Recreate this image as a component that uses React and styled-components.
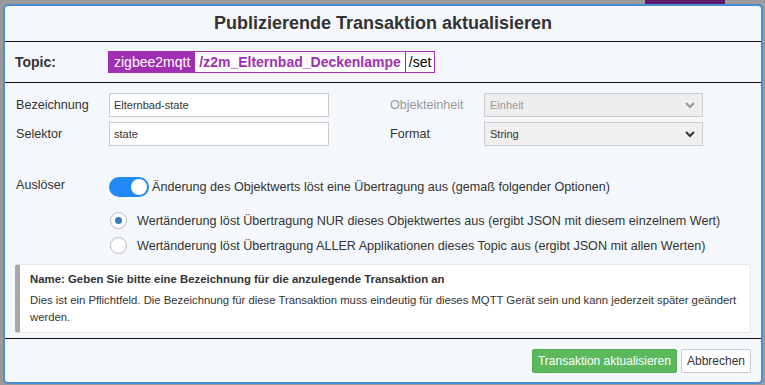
import React from 'react';
import styled, { createGlobalStyle } from 'styled-components';

const GlobalStyle = createGlobalStyle`
  html, body {
    margin: 0;
    padding: 0;
    background: #9b9b9b;
    font-family: "Liberation Sans", Arial, sans-serif;
    color: #333;
  }
`;

const Page = styled.div`
  position: relative;
  width: 765px;
  height: 385px;
  padding: 4px 0 0 3px;
  box-sizing: border-box;
  overflow: hidden;
`;

const BackTab = styled.div`
  position: absolute;
  top: 0;
  left: ${p => p.left}px;
  width: ${p => p.width}px;
  height: 4px;
  background: #5f1a6e;
`;

const Modal = styled.div`
  position: relative;
  width: 760px;
  height: 380px;
  box-sizing: border-box;
  border: 2px solid #4a8fd6;
  border-radius: 5px;
  background: #f4f8fc;
  display: flex;
  flex-direction: column;
`;

const Header = styled.div`
  height: 35px;
  border-bottom: 1px solid #111;
  display: flex;
  align-items: center;
  justify-content: center;
  h2 {
    margin: 0;
    font-size: 18px;
    font-weight: 700;
    color: #333;
  }
`;

const TopicRow = styled.div`
  height: 40px;
  border-bottom: 1px solid #111;
  display: flex;
  align-items: center;
  padding-left: 10px;
  .label {
    width: 93px;
    font-size: 14px;
    font-weight: 700;
  }
`;

const TopicBox = styled.div`
  display: flex;
  height: 22px;
  border: 1px solid #a12fb3;
  box-sizing: border-box;
  font-size: 14px;
`;

const TopicPart = styled.span`
  display: flex;
  align-items: center;
  padding: 0 ${p => (p.$pad || 4)}px;
  background: ${p => (p.$fill ? '#a12fb3' : '#fff')};
  color: ${p => (p.$fill ? '#fff' : p.$accent ? '#a12fb3' : '#000')};
  font-weight: ${p => (p.$accent ? 700 : 400)};
  border-left: ${p => (p.$sep ? '1px solid #a12fb3' : 'none')};
`;

const Body = styled.div`
  flex: 1;
  padding: 10px 10px 0 11px;
`;

const FieldGrid = styled.div`
  display: grid;
  grid-template-columns: 93px 220px 61px 94px 219px;
  grid-auto-rows: 24px;
  row-gap: 5px;
  align-items: center;
`;

const Label = styled.label`
  font-size: 12.6px;
  color: ${p => (p.$muted ? '#999' : '#333')};
  grid-column: ${p => p.$col};
`;

const TextInput = styled.input`
  height: 24px;
  box-sizing: border-box;
  border: 1px solid #ccc;
  background: #fff;
  font-family: inherit;
  font-size: 11px;
  color: #333;
  padding: 0 4px;
  outline: none;
`;

const SelectBox = styled.div`
  height: 24px;
  box-sizing: border-box;
  border: 1px solid #ccc;
  background: ${p => (p.$disabled ? '#eee' : '#efefef')};
  font-size: 11px;
  color: ${p => (p.$disabled ? '#999' : '#333')};
  display: flex;
  align-items: center;
  justify-content: space-between;
  padding: 0 6px 0 5px;
  svg {
    width: 12px;
    height: 12px;
  }
`;

const TriggerRow = styled.div`
  display: flex;
  align-items: center;
  margin-top: 31px;
  .label {
    width: 93px;
    font-size: 12.6px;
    align-self: flex-start;
    padding-top: 1px;
  }
`;

const Toggle = styled.span`
  width: 40px;
  height: 20px;
  border-radius: 10px;
  background: #2189f6;
  position: relative;
  flex: none;
  margin-right: 3px;
  &::after {
    content: '';
    position: absolute;
    right: 2px;
    top: 2px;
    width: 16px;
    height: 16px;
    border-radius: 50%;
    background: #fff;
  }
`;

const BodyText = styled.span`
  font-size: 12.6px;
  color: #333;
`;

const RadioList = styled.div`
  display: flex;
  flex-direction: column;
  gap: 8px;
  margin: 15px 0 0 93px;
`;

const RadioRow = styled.div`
  display: flex;
  align-items: center;
  gap: 10px;
`;

const Radio = styled.span`
  width: 17px;
  height: 17px;
  box-sizing: border-box;
  border-radius: 50%;
  border: 1px solid #bbb;
  background: #fff;
  display: flex;
  align-items: center;
  justify-content: center;
  margin-left: 1px;
  &::after {
    content: '';
    display: ${p => (p.$checked ? 'block' : 'none')};
    width: 7px;
    height: 7px;
    border-radius: 50%;
    background: #3a7abf;
  }
`;

const InfoBox = styled.div`
  margin: 10px 0 0 -1px;
  width: 736px;
  box-sizing: border-box;
  background: #fff;
  border: 1px solid #e6e6e6;
  border-left: 5px solid #a8a8a8;
  border-radius: 3px;
  padding: 8px 10px 6px 10px;
  font-size: 11.3px;
  color: #333;
  h4 {
    margin: 0 0 7px;
    font-size: 11.4px;
    font-weight: 700;
  }
  p {
    margin: 0;
    line-height: 17px;
  }
`;

const Footer = styled.div`
  height: 43px;
  border-top: 1px solid #111;
  display: flex;
  align-items: center;
  justify-content: flex-end;
  gap: 4px;
  padding-right: 10px;
`;

const Button = styled.button`
  height: 24px;
  box-sizing: border-box;
  padding: 0 5px;
  font-family: inherit;
  font-size: 12px;
  border-radius: 2px;
  border: 1px solid ${p => (p.$primary ? '#4cae4c' : '#ccc')};
  background: ${p => (p.$primary ? '#5cb85c' : '#fff')};
  color: ${p => (p.$primary ? '#fff' : '#333')};
`;

const Chevron = () => (
  <svg viewBox="0 0 12 12" fill="none" stroke="currentColor" strokeWidth="2">
    <path d="M2 4l4 4 4-4" />
  </svg>
);

export default function App() {
  return (
    <Page>
      <GlobalStyle />
      <BackTab left={645} width={80} />
      <Modal>
        <Header>
          <h2>Publizierende Transaktion aktualisieren</h2>
        </Header>
        <TopicRow>
          <span className="label">Topic:</span>
          <TopicBox>
            <TopicPart $fill $pad={5}>zigbee2mqtt</TopicPart>
            <TopicPart $accent>/z2m_Elternbad_Deckenlampe</TopicPart>
            <TopicPart $sep $pad={3}>/set</TopicPart>
          </TopicBox>
        </TopicRow>
        <Body>
          <FieldGrid>
            <Label $col={1}>Bezeichnung</Label>
            <TextInput defaultValue="Elternbad-state" />
            <Label $col={4} $muted>Objekteinheit</Label>
            <SelectBox $disabled>
              Einheit
              <Chevron />
            </SelectBox>
            <Label $col={1}>Selektor</Label>
            <TextInput defaultValue="state" />
            <Label $col={4}>Format</Label>
            <SelectBox>
              String
              <Chevron />
            </SelectBox>
          </FieldGrid>
          <TriggerRow>
            <span className="label">Auslöser</span>
            <Toggle />
            <BodyText>Änderung des Objektwerts löst eine Übertragung aus (gemaß folgender Optionen)</BodyText>
          </TriggerRow>
          <RadioList>
            <RadioRow>
              <Radio $checked />
              <BodyText>Wertänderung löst Übertragung NUR dieses Objektwertes aus (ergibt JSON mit diesem einzelnem Wert)</BodyText>
            </RadioRow>
            <RadioRow>
              <Radio />
              <BodyText>Wertänderung löst Übertragung ALLER Applikationen dieses Topic aus (ergibt JSON mit allen Werten)</BodyText>
            </RadioRow>
          </RadioList>
          <InfoBox>
            <h4>Name: Geben Sie bitte eine Bezeichnung für die anzulegende Transaktion an</h4>
            <p>
              Dies ist ein Pflichtfeld. Die Bezeichnung für diese Transaktion muss eindeutig für dieses MQTT Gerät sein und kann jederzeit später geändert werden.
            </p>
          </InfoBox>
        </Body>
        <Footer>
          <Button $primary>Transaktion aktualisieren</Button>
          <Button>Abbrechen</Button>
        </Footer>
      </Modal>
    </Page>
  );
}
